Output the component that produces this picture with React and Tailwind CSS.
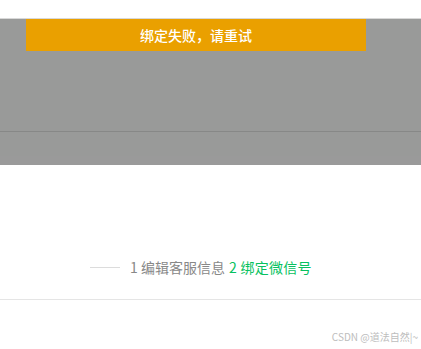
export default function App() {
  return (
    <div className="relative w-[421px] h-[349px] bg-white overflow-hidden font-['Noto_Sans_CJK_SC',sans-serif]">
      <div className="h-[18px] bg-white" />
      <div className="h-px bg-[#d8d8d8]" />
      <div className="h-[146px] bg-[#999a99] flex flex-col">
        <div className="ml-[26px] w-[340px] h-[32px] bg-[#eaa000] flex items-center justify-center text-white text-[14px] font-medium">
          绑定失败，请重试
        </div>
        <div className="h-[80px]" />
        <div className="h-px bg-[#878887]" />
        <div className="h-[24px]" />
        <div className="flex-1 bg-[#9a9a9a]" />
      </div>
      <div className="h-[91px]" />
      <div className="flex items-center h-[22px] text-[14px]">
        <div className="ml-[90px] w-[30px] h-px bg-[#dcdcdc]" />
        <span className="ml-[10px] text-[#888888]">1 编辑客服信息</span>
        <span className="ml-[4px] text-[#07c160] tracking-[0.3px]">2 绑定微信号</span>
      </div>
      <div className="h-[21px]" />
      <div className="h-px bg-[#e5e5e5]" />
      <div className="absolute right-[3px] bottom-[5px] text-[10px] text-[#bdbdbd]">CSDN @道法自然|~</div>
    </div>
  );
}
